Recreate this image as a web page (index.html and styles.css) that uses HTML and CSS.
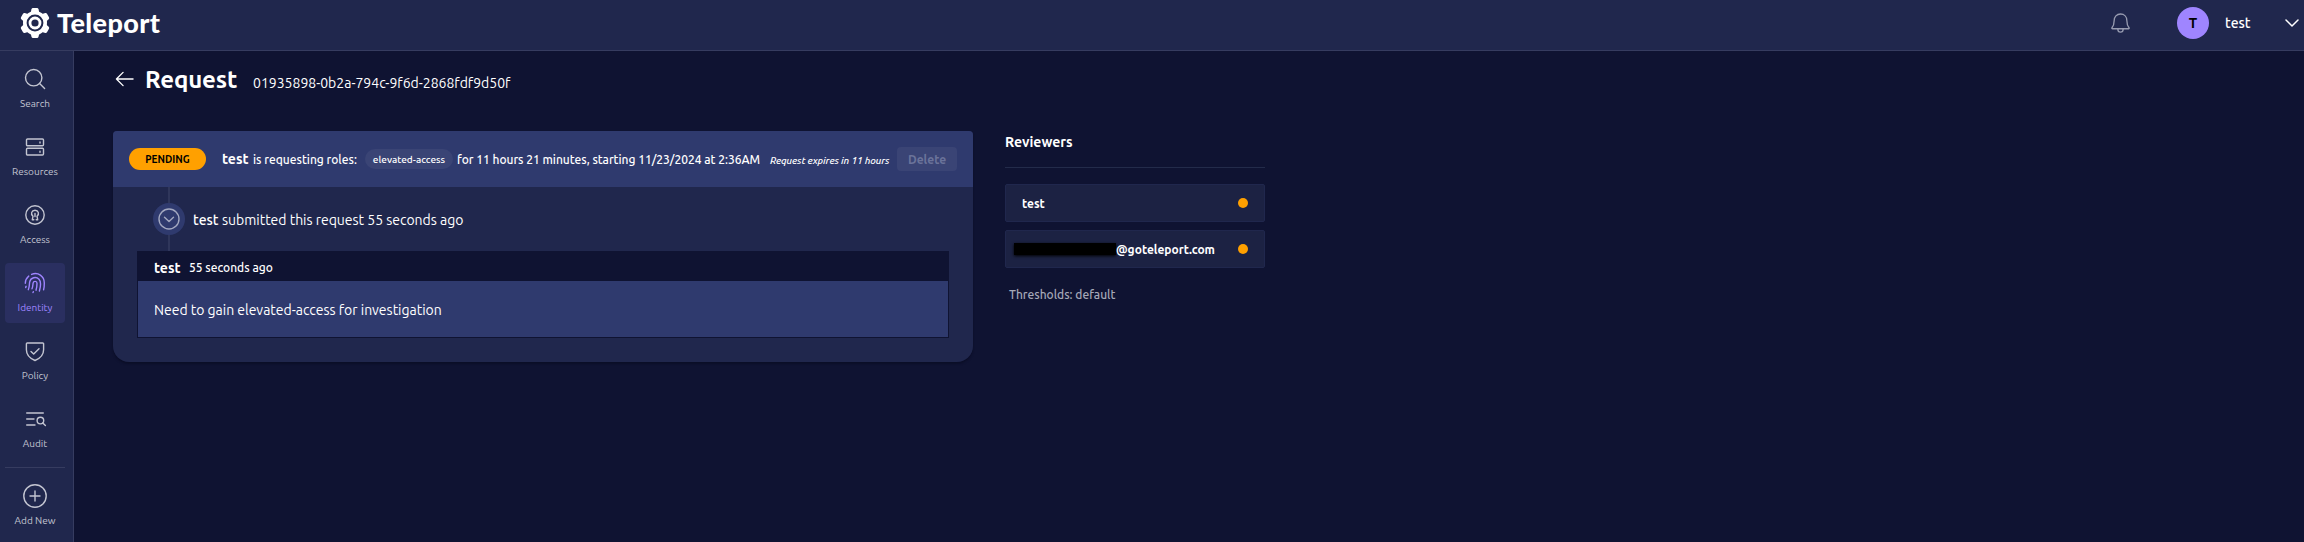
FILE: index.html
```html
<!DOCTYPE html>
<html lang="en">
<head>
<meta charset="utf-8">
<title>Teleport</title>
<link rel="stylesheet" href="styles.css">
</head>
<body>
<div class="app">
  <header class="topbar">
    <div class="brand">
      <svg class="gear" viewBox="0 0 30 30"><g fill="#fff"><circle cx="15" cy="15" r="12"/><g id="teeth"><path id="tooth" d="M10.600 5 11.500 1.200Q11.800 0 13 0H17Q18.200 0 18.500 1.200L19.400 5Z"/><use href="#tooth" transform="rotate(60 15 15)"/><use href="#tooth" transform="rotate(120 15 15)"/><use href="#tooth" transform="rotate(180 15 15)"/><use href="#tooth" transform="rotate(240 15 15)"/><use href="#tooth" transform="rotate(300 15 15)"/></g></g><circle cx="15" cy="15" r="7.400" fill="none" stroke="#20274d" stroke-width="2"/><circle cx="15" cy="15" r="3.600" fill="#20274d"/></svg>
      <span class="wordmark">Teleport</span>
    </div>
    <div class="account">
      <svg class="bell" viewBox="0 0 20 22" fill="none" stroke="#979bb0" stroke-width="1.400" stroke-linejoin="round"><path d="M10 1C6 1 3.300 4 3.300 8c0 4-1.100 6-2.300 7.500-.4.600 0 1 .6 1h16.800c.6 0 1-.4.600-1C17.800 14 16.700 12 16.700 8c0-4-2.700-7-6.700-7ZM7.200 17c0 2 1.200 3 2.800 3s2.800-1 2.800-3"/></svg>
      <span class="avatar">T</span>
      <span class="username">test</span>
      <svg class="caret" viewBox="0 0 14 8" fill="none" stroke="#fff" stroke-width="1.500" stroke-linecap="round" stroke-linejoin="round"><path d="m1 1 6 6 6-6"/></svg>
    </div>
  </header>
  <div class="body">
    <nav class="sidebar">
      <a class="nav-item"><svg viewBox="0 0 24 24"><circle cx="10.700" cy="10.700" r="8.200"/><path d="m16.600 16.600 5 5"/></svg><span>Search</span></a>
      <a class="nav-item"><svg viewBox="0 0 24 24"><rect x="3.500" y="4" width="17" height="6.800" rx="1"/><rect x="3.500" y="13.200" width="17" height="6.800" rx="1"/><path d="M17 7v1M17 16.200v1"/></svg><span>Resources</span></a>
      <a class="nav-item"><svg viewBox="0 0 24 24"><circle cx="12" cy="12" r="9.200"/><path d="M9.300 16.800 10 13.200C7.300 11 8.600 7.200 12 7.200s4.700 3.800 2 6l.7 3.600h-1.500M9.300 16.800h1.500M12 10.500v3"/></svg><span>Access</span></a>
      <a class="nav-item active"><svg viewBox="0 0 24 24"><path d="M2.300 12.300C2.300 9.500 3.700 7 5.800 5.100M8.600 3.400C15 .6 21.300 5.200 21.300 12c0 2.400-.1 4.700-.7 6.800M2.700 16.500l.4-1.200M5.300 18.700C6.700 15.700 6.200 13 6.700 10.800 7.700 6.500 13 5.200 16 8.200c2.600 2.800 1.500 7.800.4 11.800M9 17.800c.9-2.400.9-4.100 1.100-5.800.4-2.300 3.900-2.200 3.900.2 0 2.800-.3 4.700-1 7M10 21.500l.3-.8"/></svg><span>Identity</span></a>
      <a class="nav-item"><svg viewBox="0 0 24 24"><path d="M4.200 4h15.600a.8.800 0 0 1 .8.800v6c0 6-4.600 9.100-8.600 10.700C8 19.900 3.400 16.800 3.400 10.800v-6A.8.800 0 0 1 4.200 4ZM8 12.500l2.700 2.600L16 9.800"/></svg><span>Policy</span></a>
      <a class="nav-item"><svg viewBox="0 0 24 24"><path d="M3.700 6h16.600M3.700 12h7.300M3.700 18h8.300"/><circle cx="17.400" cy="13.600" r="3.300"/><path d="m19.800 16 2.600 2.600"/></svg><span>Audit</span></a>
      <div class="divider"></div>
      <a class="nav-item add"><svg viewBox="0 0 24 24"><circle cx="12" cy="12" r="11.200"/><path d="M12 7v10M7 12h10"/></svg><span>Add New</span></a>
    </nav>
    <main class="content">
      <div class="heading">
        <svg class="back" viewBox="0 0 20 16"><path d="m8.500 1-7 7 7 7M1.500 8H19"/></svg>
        <h1>Request</h1>
        <span class="request-id">01935898-0b2a-794c-9f6d-2868fdf9d50f</span>
      </div>
      <div class="columns">
        <section class="card">
          <div class="card-head">
            <span class="status"><span>PENDING</span></span>
            <b class="requester">test</b>
            <span class="roles-label">is requesting roles:</span>
            <span class="role"><span>elevated-access</span></span>
            <span class="duration">for 11 hours 21 minutes, starting 11/23/2024 at 2:36AM</span>
            <i class="expires">Request expires in 11 hours</i>
            <button class="delete" disabled>Delete</button>
          </div>
          <div class="timeline">
            <div class="event">
              <span class="event-mark"><svg viewBox="0 0 22 22"><circle cx="11" cy="11" r="10"/><path d="m6.500 9.200 4.500 4.300 4.500-4.300"/></svg></span>
              <b class="event-user">test</b>
              <span class="event-text">submitted this request 55 seconds ago</span>
            </div>
            <div class="comment">
              <div class="comment-head"><b class="requester">test</b><span class="ago">55 seconds ago</span></div>
              <div class="comment-body"><span>Need to gain elevated-access for investigation</span></div>
            </div>
          </div>
        </section>
        <aside class="reviewers">
          <h2><span>Reviewers</span></h2>
          <div class="reviewer"><b class="reviewer-name">test</b><span class="dot"></span></div>
          <div class="reviewer redacted"><span class="mask"></span><b class="email">@goteleport.com</b><span class="dot"></span></div>
          <p class="thresholds"><span>Thresholds: default</span></p>
        </aside>
      </div>
    </main>
  </div>
</div>
</body>
</html>
```
FILE: styles.css
```css
* { box-sizing: border-box; }
body { margin: 0; background: #0f1332; color: #fff; font-family: Ubuntu, "Noto Sans", sans-serif; overflow: hidden; }
.app { height: 542px; display: flex; flex-direction: column; }
span, b, i, button, h1 { white-space: nowrap; }
svg { flex: none; display: block; }
.topbar { height: 51px; flex: none; display: flex; justify-content: space-between; background: #20274d; border-bottom: 1px solid #363c60; }
.brand { display: flex; align-items: center; padding: 0 0 4px 20px; gap: 7px; }
.gear { width: 30px; height: 30px; }
.wordmark { font: 900 27px/40px Lato, sans-serif; letter-spacing: .4px; margin-top: -1px; }
.account { display: flex; align-items: center; padding: 0 5px 4px 0; }
.bell { width: 19px; height: 21px; margin-right: 47px; }
.avatar { width: 32px; height: 32px; border-radius: 50%; background: #9f85ff; color: #000; font-size: 14px; font-weight: 700; line-height: 32px; text-align: center; }
.username { font-size: 14px; font-weight: 500; width: 26px; margin: 0 34px 0 16px; }
.caret { width: 14px; height: 8px; }
.body { flex: 1; display: flex; min-height: 0; }
.sidebar { width: 74px; flex: none; background: #20274d; border-right: 1px solid #363c60; padding: 8px 8px 0 5px; display: flex; flex-direction: column; gap: 8px; }
.nav-item { height: 60px; flex: none; display: flex; flex-direction: column; align-items: center; padding-top: 8px; border-radius: 4px; color: #c3c5d1; font-size: 10px; line-height: 14px; gap: 6px; }
.nav-item svg { width: 24px; height: 24px; fill: none; stroke: currentColor; stroke-width: 1.400; stroke-linecap: round; stroke-linejoin: round; }
.active { background: #2a2f60; color: #9f85ff; }
.divider { height: 1px; background: #363c60; flex: none; }
.content { flex: 1; padding: 9px 0 0 39px; }
.heading { display: flex; align-items: center; height: 40px; padding-left: 2px; }
.back { width: 19px; height: 16px; margin-bottom: 2px; fill: none; stroke: #fff; stroke-width: 1.400; stroke-linecap: round; stroke-linejoin: round; }
h1 { margin: 0 17px 0 11px; width: 91px; font-size: 24px; line-height: 32px; font-weight: 700; letter-spacing: -.1px; }
.request-id { font-size: 14px; padding-top: 6px; }
.columns { display: flex; align-items: flex-start; gap: 32px; margin-top: 31px; }
.card { width: 860px; height: 231px; border-radius: 4px 4px 16px 16px; background: #20274d; overflow: hidden; box-shadow: 0 2px 2px #0b0e28; }
.card-head { height: 56px; background: #2f3a6e; display: flex; align-items: center; padding: 0 16px; font-size: 12px; font-weight: 500; }
.status { width: 77px; height: 22px; border-radius: 11px; background: #ffa000; color: #000; font-size: 10px; font-weight: 700; line-height: 23px; text-align: center; margin-right: 16px; }
.requester { font-size: 14px; width: 27px; margin-right: 4px; }
.roles-label { width: 104px; margin-right: 8px; }
.role { width: 88px; height: 20px; border-radius: 10px; background: #3a4475; font-size: 10px; line-height: 21px; text-align: center; margin-right: 4px; }
.duration { width: 303px; margin-right: 10px; letter-spacing: -.02px; }
.expires { width: 119px; font-size: 10px; padding-top: 3px; margin-right: 8px; letter-spacing: -.1px; }
.delete { width: 60px; flex: none; height: 24px; border: 0; border-radius: 4px; padding: 0; background: #3a4475; color: #6b739a; font: 700 12px Ubuntu, "Noto Sans", sans-serif; }
.timeline { padding: 0 24px; background: linear-gradient(#2f365b, #2f365b) 55px 0 / 2px 64px no-repeat; }
.event { height: 64px; display: flex; align-items: center; padding-left: 16px; font-size: 14px; }
.event-mark { width: 32px; height: 32px; border-radius: 50%; background: #2f3a6e; padding: 5px; margin-right: 8px; }
.event-mark svg { width: 22px; height: 22px; fill: none; stroke: #a3a8c0; stroke-width: 1.400; stroke-linecap: round; stroke-linejoin: round; }
.event-user { width: 25px; margin-right: 4px; font-weight: 500; }
.event-user, .event-text { padding-top: 2px; }
.event-text { letter-spacing: -.02px; }
.comment { height: 87px; border: 1px solid #0f1332; background: #2f3a6e; }
.comment-head { height: 29px; background: #0f1332; display: flex; align-items: center; padding: 2px 0 0 16px; }
.ago { margin-left: 4px; font-size: 12px; font-weight: 500; }
.comment-body { height: 56px; display: flex; align-items: center; padding: 2px 0 0 16px; font-size: 14px; letter-spacing: -.02px; }
.reviewers { width: 260px; }
h2 { margin: 0 0 16px; height: 37px; border-bottom: 1px solid #232b4a; font-size: 14px; line-height: 23px; font-weight: 700; }
.reviewer { height: 38px; margin-bottom: 8px; border: 1px solid #20274d; border-radius: 2px; background: #1c2243; display: flex; align-items: center; padding: 0 16px; font-size: 12px; }
.redacted { padding-left: 8px; }
.mask { width: 102px; height: 12px; background: #000; box-shadow: 0 1px 3px #000; }
.dot { width: 10px; height: 10px; border-radius: 50%; background: #ffa000; margin-left: auto; }
.thresholds { margin: 17px 0 0 4px; font-size: 12px; line-height: 20px; color: #a5a8b8; font-weight: 500; }
```
